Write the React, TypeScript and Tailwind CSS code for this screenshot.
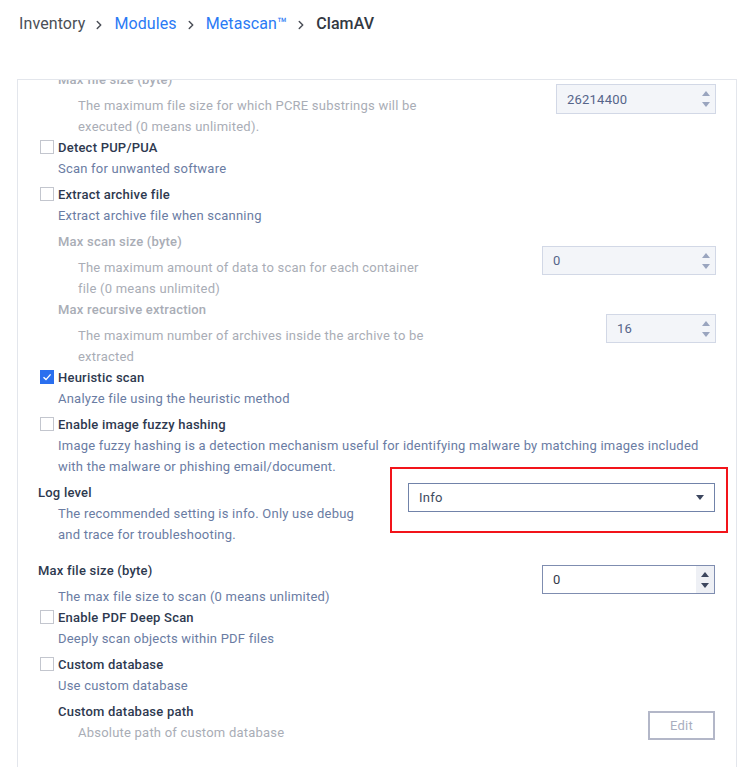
import { ChevronRight } from 'lucide-react';
import type { ReactNode } from 'react';

const font = { fontFamily: 'Roboto, "Liberation Sans", sans-serif' };

function Spinner({ dark = false }: { dark?: boolean }) {
  const color = dark ? 'border-b-[#3c465e]' : 'border-b-[#9aa5bf]';
  const colorDown = dark ? 'border-t-[#3c465e]' : 'border-t-[#9aa5bf]';
  return (
    <div
      className={
        'flex w-[18px] flex-col items-center justify-center gap-[6px] self-stretch ' +
        (dark ? 'bg-[#eef0f5]' : '')
      }
    >
      <span className={'h-0 w-0 border-x-[4px] border-b-[5px] border-x-transparent ' + color} />
      <span className={'h-0 w-0 border-x-[4px] border-t-[5px] border-x-transparent ' + colorDown} />
    </div>
  );
}

function NumberBox({ value, width, disabled = true }: { value: string; width: string; disabled?: boolean }) {
  return (
    <div
      className={
        'flex h-[29px] items-center border pl-[10px] ' +
        width +
        (disabled
          ? ' border-[#d2d8e6] bg-[#f3f5f9] text-[#56658a]'
          : ' border-[#7f8db0] bg-white text-[#333a4a]')
      }
    >
      <span className="flex-1 text-[13px]">{value}</span>
      <Spinner dark={!disabled} />
    </div>
  );
}

function Checkbox({ checked = false }: { checked?: boolean }) {
  if (checked) {
    return (
      <span className="mt-[3px] flex h-[14px] w-[14px] items-center justify-center bg-[#2a6fef]">
        <svg width="10" height="10" viewBox="0 0 10 10" fill="none">
          <path d="M1.5 5.2 L4 7.6 L8.6 2.4" stroke="white" strokeWidth="1.4" />
        </svg>
      </span>
    );
  }
  return <span className="mt-[3px] h-[14px] w-[14px] border border-[#c3c6ce] bg-white" />;
}

function CheckItem({
  label,
  desc,
  checked,
  className = '',
}: {
  label: string;
  desc: ReactNode;
  checked?: boolean;
  className?: string;
}) {
  return (
    <div className={'pl-[2px] ' + className}>
      <div className="flex items-start gap-[4px]">
        <Checkbox checked={checked} />
        <span className="font-medium text-[#2e394f]">{label}</span>
      </div>
      <div className="pl-[18px] text-[#6a7ca3]">{desc}</div>
    </div>
  );
}

export default function App() {
  return (
    <div
      className="h-[767px] w-full overflow-hidden bg-white text-[13px] leading-[21px] tracking-[0.22px]"
      style={font}
    >
      <div className="flex h-[79px] items-start pl-[19px] pt-[13px] text-[16px] leading-[22px] tracking-[0.1px]">
        <span className="text-[#4b4f57]">Inventory</span>
        <ChevronRight size={14} strokeWidth={2.5} className="ml-[7px] mr-[8px] mt-[5px] text-[#4b4f57]" />
        <span className="text-[#2a7af5]">Modules</span>
        <ChevronRight size={14} strokeWidth={2.5} className="ml-[7px] mr-[8px] mt-[5px] text-[#4b4f57]" />
        <span className="text-[#2a7af5]">Metascan™</span>
        <ChevronRight size={14} strokeWidth={2.5} className="ml-[7px] mr-[8px] mt-[5px] text-[#4b4f57]" />
        <span className="font-medium text-[#333842]">ClamAV</span>
      </div>

      <div className="ml-[17px] h-[688px] w-[720px] overflow-hidden border-x border-t border-[#e3e6ec]">
        <div className="-mt-[11px] pl-[20px] pr-[20px]">
          {/* PCRE max file size */}
          <div className="flex items-start justify-between pl-[20px]">
            <div>
              <div className="font-medium text-[#a9adb6]">Max file size (byte)</div>
              <div className="mt-[5px] pl-[20px] text-[#a9adb6]">
                The maximum file size for which PCRE substrings will be
                <br />
                executed (0 means unlimited).
              </div>
            </div>
            <div className="mt-[15px]">
              <NumberBox value="26214400" width="w-[160px] h-[30px]" />
            </div>
          </div>

          <CheckItem label="Detect PUP/PUA" desc="Scan for unwanted software" />
          <CheckItem className="mt-[5px]" label="Extract archive file" desc="Extract archive file when scanning" />

          <div className="mt-[5px] flex items-start justify-between pl-[20px]">
            <div>
              <div className="font-medium text-[#a9adb6]">Max scan size (byte)</div>
              <div className="mt-[5px] pl-[20px] text-[#a9adb6]">
                The maximum amount of data to scan for each container
                <br />
                file (0 means unlimited)
              </div>
            </div>
            <div className="mt-[15px]">
              <NumberBox value="0" width="w-[174px]" />
            </div>
          </div>

          <div className="flex items-start justify-between pl-[20px]">
            <div>
              <div className="font-medium text-[#a9adb6]">Max recursive extraction</div>
              <div className="mt-[5px] pl-[20px] text-[#a9adb6]">
                The maximum number of archives inside the archive to be
                <br />
                extracted
              </div>
            </div>
            <div className="mt-[15px]">
              <NumberBox value="16" width="w-[110px]" />
            </div>
          </div>

          <CheckItem checked label="Heuristic scan" desc="Analyze file using the heuristic method" />
          <CheckItem
            className="mt-[5px]"
            label="Enable image fuzzy hashing"
            desc={
              <>
                Image fuzzy hashing is a detection mechanism useful for identifying malware by matching images included
                <br />
                with the malware or phishing email/document.
              </>
            }
          />

          {/* Log level */}
          <div className="mt-[5px] flex items-start justify-between">
            <div>
              <div className="font-medium text-[#2e394f]">Log level</div>
              <div className="pl-[20px] text-[#6a7ca3]">
                The recommended setting is info. Only use debug
                <br />
                and trace for troubleshooting.
              </div>
            </div>
            <div className="relative mr-px mt-px">
              <div className="flex h-[29px] w-[307px] items-center border border-[#7183a9] bg-white pl-[10px] pr-[10px]">
                <span className="flex-1 text-[#404a60]">Info</span>
                <span className="h-0 w-0 border-x-[4px] border-t-[5px] border-x-transparent border-t-[#3c465e]" />
              </div>
              <div className="pointer-events-none absolute -bottom-[21px] -left-[18px] -right-[13px] -top-[16px] border-2 border-[#f2141a]" />
            </div>
          </div>

          {/* Max file size */}
          <div className="mt-[15px] flex items-start justify-between">
            <div>
              <div className="font-medium text-[#2e394f]">Max file size (byte)</div>
              <div className="mt-[5px] pl-[20px] text-[#6a7ca3]">The max file size to scan (0 means unlimited)</div>
            </div>
            <div className="mr-px mt-[5px]">
              <NumberBox value="0" width="w-[173px]" disabled={false} />
            </div>
          </div>

          <CheckItem label="Enable PDF Deep Scan" desc="Deeply scan objects within PDF files" />
          <CheckItem className="mt-[5px]" label="Custom database" desc="Use custom database" />

          <div className="mt-[5px] flex items-start justify-between pl-[20px]">
            <div>
              <div className="font-medium text-[#2e394f]">Custom database path</div>
              <div className="pl-[20px] text-[#a9adb6]">Absolute path of custom database</div>
            </div>
            <button
              disabled
              className="mr-px mt-[10px] h-[29px] w-[67px] border-2 border-[#b3b7c8] bg-white text-[13px] text-[#a9aebf]"
            >
              Edit
            </button>
          </div>
        </div>
      </div>
    </div>
  );
}
